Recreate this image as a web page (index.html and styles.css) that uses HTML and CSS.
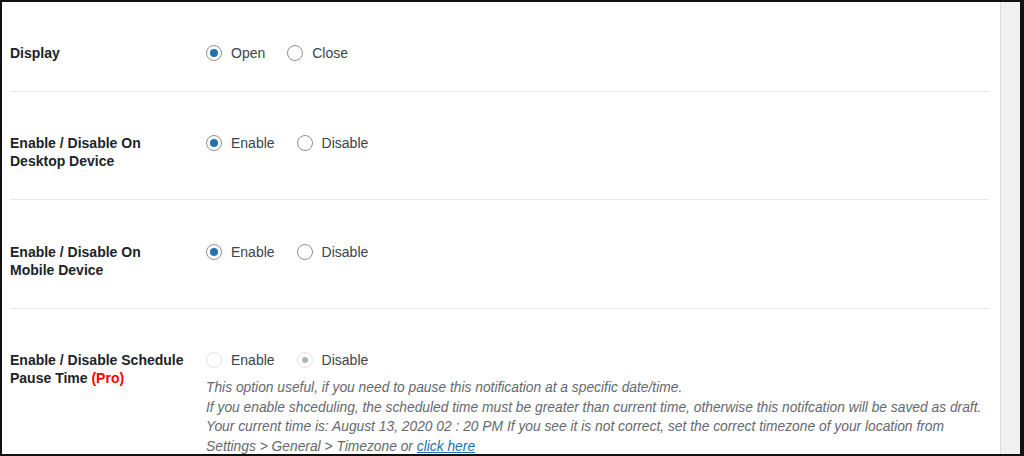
FILE: index.html
```html
<!DOCTYPE html>
<html>
<head>
<meta charset="utf-8">
<link rel="stylesheet" href="styles.css">
</head>
<body>
<div class="frame">
  <main class="main">
    <div class="row">
      <div class="label">Display</div>
      <div class="field">
        <div class="radios">
          <label class="opt"><span class="radio checked"></span>Open</label>
          <label class="opt"><span class="radio"></span>Close</label>
        </div>
      </div>
    </div>
    <div class="row">
      <div class="label">Enable / Disable On<br>Desktop Device</div>
      <div class="field">
        <div class="radios">
          <label class="opt"><span class="radio checked"></span>Enable</label>
          <label class="opt"><span class="radio"></span>Disable</label>
        </div>
      </div>
    </div>
    <div class="row">
      <div class="label">Enable / Disable On<br>Mobile Device</div>
      <div class="field">
        <div class="radios">
          <label class="opt"><span class="radio checked"></span>Enable</label>
          <label class="opt"><span class="radio"></span>Disable</label>
        </div>
      </div>
    </div>
    <div class="row">
      <div class="label">Enable / Disable Schedule<br>Pause Time <span class="pro">(Pro)</span></div>
      <div class="field">
        <div class="radios">
          <label class="opt"><span class="radio disabled"></span>Enable</label>
          <label class="opt"><span class="radio disabled checked-disabled"></span>Disable</label>
        </div>
        <p class="description">This option useful, if you need to pause this notification at a specific date/time.<br>If you enable shceduling, the scheduled time must be greater than current time, otherwise this notifcation will be saved as draft.<br>Your current time is: August 13, 2020 02 : 20 PM If you see it is not correct, set the correct timezone of your location from<br>Settings &gt; General &gt; Timezone or <a href="#">click here</a></p>
      </div>
    </div>
  </main>
  <div class="scrollbar"></div>
</div>
</body>
</html>
```
FILE: styles.css
```css
html, body {
  margin: 0;
  padding: 0;
  background: #111;
}
body {
  width: 1024px;
  height: 456px;
  overflow: hidden;
  font-family: "Liberation Sans", Arial, sans-serif;
}
.frame {
  display: flex;
  height: 452px;
  margin: 2px 4px 2px 2px;
  background: #fff;
  overflow: hidden;
}
.main {
  flex: 1;
  padding: 0 11px 0 8px;
  background: #fff;
}
.scrollbar {
  width: 19px;
  background: #f0f0f0;
  border-left: 1px solid #dcdcdc;
}
.row {
  display: grid;
  grid-template-columns: 196px 1fr;
  padding: 42px 0 29px;
  border-bottom: 1px solid #e6e6e6;
}
.row:nth-child(3) {
  padding-top: 43px;
}
.label {
  font-size: 14px;
  font-weight: 700;
  line-height: 18px;
  color: #1d2327;
}
.pro {
  color: #f00;
}
.radios {
  display: flex;
  gap: 22px;
  height: 18px;
  align-items: center;
}
.opt {
  display: flex;
  align-items: center;
  gap: 9px;
  font-size: 14px;
  color: #3c434a;
}
.radio {
  box-sizing: border-box;
  width: 16px;
  height: 16px;
  border-radius: 50%;
  border: 1px solid #8c8f94;
  background: #fff;
  display: flex;
  align-items: center;
  justify-content: center;
}
.radio.checked::after {
  content: "";
  width: 8px;
  height: 8px;
  border-radius: 50%;
  background: #2271b1;
}
.radio.disabled {
  border-color: #e2e2e2;
}
.radio.checked-disabled::after {
  content: "";
  width: 6px;
  height: 6px;
  border-radius: 50%;
  background: #a9b4bd;
}
.description {
  margin: 9px 0 0;
  font-size: 13.8px;
  line-height: 19.5px;
  font-style: italic;
  color: #646970;
  white-space: nowrap;
}
.description a {
  color: #2271b1;
  text-decoration: underline;
}
```
